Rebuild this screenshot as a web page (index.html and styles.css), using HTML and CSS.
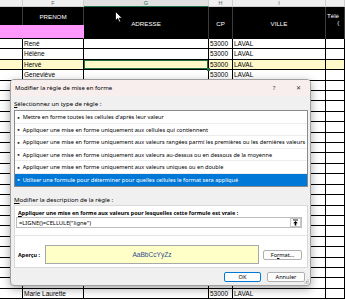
FILE: index.html
```html
<!DOCTYPE html>
<html lang="fr">
<head>
    <meta charset="UTF-8">
    <title>Mise en forme conditionnelle</title>
    <link rel="stylesheet" href="styles.css">
</head>
<body>
    <div class="sheet">
        <div class="row letters">
            <i></i><i>F</i><i class="sel">G</i><i>H</i><i>I</i><i></i>
        </div>
        <div class="header">
            <div class="e1"></div>
            <div class="f1">PRENOM</div>
            <div class="e2 pink"></div>
            <div class="f2 pink"></div>
            <div class="span g">ADRESSE</div>
            <div class="span h">CP</div>
            <div class="span i">VILLE</div>
            <div class="span j top">Télé<br>&nbsp;&nbsp;&nbsp;&nbsp;&nbsp;&nbsp;(</div>
        </div>
        <div class="row"><i></i><i>René</i><i></i><i>53000</i><i>LAVAL</i><i></i></div>
        <div class="row"><i></i><i>Hélène</i><i></i><i>53000</i><i>LAVAL</i><i></i></div>
        <div class="row hl"><i></i><i>Hervé</i><i class="active"></i><i>53000</i><i>LAVAL</i><i></i></div>
        <div class="row"><i></i><i>Geneviève</i><i></i><i>53000</i><i>LAVAL</i><i></i></div>
        <div class="row"><i></i><i></i><i></i><i></i><i></i><i></i></div>
        <div class="row"><i></i><i></i><i></i><i></i><i></i><i></i></div>
        <div class="row"><i></i><i></i><i></i><i></i><i></i><i></i></div>
        <div class="row"><i></i><i></i><i></i><i></i><i></i><i></i></div>
        <div class="row"><i></i><i></i><i></i><i></i><i></i><i></i></div>
        <div class="row"><i></i><i></i><i></i><i></i><i></i><i></i></div>
        <div class="row"><i></i><i></i><i></i><i></i><i></i><i></i></div>
        <div class="row"><i></i><i></i><i></i><i></i><i></i><i></i></div>
        <div class="row"><i></i><i></i><i></i><i></i><i></i><i></i></div>
        <div class="row"><i></i><i></i><i></i><i></i><i></i><i></i></div>
        <div class="row"><i></i><i></i><i></i><i></i><i></i><i></i></div>
        <div class="row"><i></i><i></i><i></i><i></i><i></i><i></i></div>
        <div class="row"><i></i><i></i><i></i><i></i><i></i><i></i></div>
        <div class="row"><i></i><i></i><i></i><i></i><i></i><i></i></div>
        <div class="row"><i></i><i></i><i></i><i></i><i></i><i></i></div>
        <div class="row"><i></i><i></i><i></i><i></i><i></i><i></i></div>
        <div class="row"><i></i><i></i><i></i><i></i><i></i><i></i></div>
        <div class="row"><i></i><i></i><i></i><i></i><i></i><i></i></div>
        <div class="row"><i></i><i></i><i></i><i></i><i></i><i></i></div>
        <div class="row"><i></i><i></i><i></i><i></i><i></i><i></i></div>
        <div class="row"><i></i><i>Marie Laurette</i><i></i><i>53000</i><i>LAVAL</i><i></i></div>
    </div>

    <svg class="cursor" width="8" height="12" viewBox="0 0 8 12">
        <path d="M0.5 0.5 L0.5 9.5 L2.7 7.5 L4.2 11 L5.6 10.4 L4.2 7.1 L7.2 7.1 Z" fill="#fff" stroke="#000" stroke-width="0.8"/>
    </svg>

    <div class="dialog">
        <div class="titlebar">
            <span class="title">Modifier la règle de mise en forme</span>
            <span class="tb-btn">?</span>
            <span class="tb-btn close">✕</span>
        </div>
        <div class="dlg-body">
            <div class="label"><u>S</u>électionnez un type de règle :</div>
            <ul class="rules">
                <li><b>►</b>Mettre en forme toutes les cellules d'après leur valeur</li>
                <li><b>►</b>Appliquer une mise en forme uniquement aux cellules qui contiennent</li>
                <li><b>►</b>Appliquer une mise en forme uniquement aux valeurs rangées parmi les premières ou les dernières valeurs</li>
                <li><b>►</b>Appliquer une mise en forme uniquement aux valeurs au-dessus ou en dessous de la moyenne</li>
                <li><b>►</b>Appliquer une mise en forme uniquement aux valeurs uniques ou en double</li>
                <li class="selected"><b>►</b>Utiliser une formule pour déterminer pour quelles cellules le format sera appliqué</li>
            </ul>
            <div class="label second"><u>M</u>odifier la description de la règle :</div>
            <div class="desc">
                <div class="desc-top">
                    <div class="strong"><u>A</u>ppliquer une mise en forme aux valeurs pour lesquelles cette formule est vraie :</div>
                    <div class="formula">
                        <span class="expr">=LIGNE()=CELLULE("ligne")</span>
                        <span class="pick">
                            <svg width="7" height="7" viewBox="0 0 7 7">
                                <path d="M1 1 H6" stroke="#000" stroke-width="0.9"/>
                                <path d="M3.5 2 L1.2 4.3 H2.7 V6.5 H4.3 V4.3 H5.8 Z" fill="#000"/>
                            </svg>
                        </span>
                    </div>
                </div>
                <div class="preview-row">
                    <span class="strong plabel">Aperçu :</span>
                    <div class="preview">AaBbCcYyZz</div>
                    <button class="btn format">Fo<u>r</u>mat...</button>
                </div>
            </div>
            <div class="actions">
                <button class="btn ok">OK</button>
                <button class="btn">Annuler</button>
            </div>
        </div>
        <svg class="grip" width="5" height="5" viewBox="0 0 5 5">
            <rect x="3.5" y="0.5" width="1" height="1" fill="#999"/>
            <rect x="2" y="2" width="1" height="1" fill="#999"/>
            <rect x="3.5" y="2" width="1" height="1" fill="#999"/>
            <rect x="0.5" y="3.5" width="1" height="1" fill="#999"/>
            <rect x="2" y="3.5" width="1" height="1" fill="#999"/>
            <rect x="3.5" y="3.5" width="1" height="1" fill="#999"/>
        </svg>
    </div>
</body>
</html>
```

FILE: styles.css
```css
html, body {
    margin: 0;
    padding: 0;
    overflow: hidden;
    background: #fff;
}

body {
    width: 345px;
    height: 300px;
    position: relative;
    font-family: "Liberation Sans", Arial, sans-serif;
}

/* ---------- spreadsheet ---------- */

.sheet {
    width: 345px;
    overflow: hidden;
}

.row,
.header {
    display: grid;
    grid-template-columns: 23px 61px 125px 24px 93px 19px;
}

.row {
    height: 10.42px;
}

.row i {
    font-style: normal;
    font-size: 6.5px;
    line-height: 9.4px;
    padding-left: 1px;
    color: #000;
    border-right: 1px solid #000;
    border-bottom: 1px solid #000;
    white-space: nowrap;
    overflow: hidden;
    position: relative;
}

.row.hl {
    background: #fff9c9;
}

.row .active {
    box-shadow: inset 0 0 0 1px #217346;
    overflow: visible;
}

.row .active::after {
    content: "";
    position: absolute;
    right: -2px;
    bottom: -2px;
    width: 3px;
    height: 3px;
    background: #217346;
    z-index: 2;
}

.letters {
    height: 7px;
    background: #efefef;
}

.letters i {
    font-size: 5.5px;
    line-height: 7px;
    text-align: center;
    color: #666;
    padding: 0;
    border-right: 1px solid #cfcfcf;
    border-bottom: 1px solid #cfcfcf;
}

.letters .sel {
    background: #e1e1e1;
    border-bottom: 1px solid #217346;
    color: #217346;
}

.header {
    grid-template-rows: 18px 14px;
    background: #000;
    color: #fff;
    font-size: 6.2px;
}

.header div {
    display: flex;
    align-items: center;
    justify-content: center;
    border-right: 1px solid #3a3a3a;
}

.header .e1 { grid-column: 1; grid-row: 1; }
.header .f1 { grid-column: 2; grid-row: 1; }
.header .e2 { grid-column: 1; grid-row: 2; }
.header .f2 { grid-column: 2; grid-row: 2; }
.header .span { grid-row: 1 / span 2; }
.header .g { grid-column: 3; }
.header .h { grid-column: 4; }
.header .i { grid-column: 5; }
.header .j { grid-column: 6; }

.header .pink {
    background: #ff99ff;
    border-right-color: #ff99ff;
    border-bottom: 1px solid #000;
}

.header .top {
    align-items: flex-start;
    justify-content: flex-start;
    padding: 5px 0 0 1px;
    line-height: 7px;
    white-space: nowrap;
    overflow: hidden;
}

.cursor {
    position: absolute;
    left: 115px;
    top: 11px;
}

/* ---------- dialog ---------- */

.dialog {
    position: absolute;
    left: 10px;
    top: 79px;
    width: 301px;
    height: 207px;
    box-sizing: border-box;
    background: #f0f0f0;
    border: 1px solid #a0a0a0;
    border-radius: 4px;
    box-shadow: 0 3px 10px rgba(0, 0, 0, 0.35);
    font-family: "Noto Sans", "Open Sans", sans-serif;
    font-size: 5.8px;
    color: #000;
    overflow: hidden;
}

.titlebar {
    height: 16px;
    background: #f8eeee;
    display: flex;
    align-items: center;
    padding-left: 4px;
}

.title {
    flex: 1;
    font-size: 6px;
}

.tb-btn {
    width: 24px;
    text-align: center;
    font-size: 6px;
    color: #333;
}

.dlg-body {
    padding: 0 2px 0 3px;
}

.label {
    height: 8px;
    line-height: 8px;
    margin-top: 4px;
    font-size: 6.1px;
}

.label.second {
    margin-top: 9px;
}

.rules {
    list-style: none;
    margin: 2px 0 0;
    padding: 0;
    height: 77px;
    box-sizing: border-box;
    background: #fff;
    border: 1px solid #8a8a8a;
}

.rules li {
    height: 12.5px;
    line-height: 12px;
    box-sizing: border-box;
    padding-left: 2px;
    font-size: 5.6px;
    border-bottom: 1px solid #ececec;
    white-space: nowrap;
    overflow: hidden;
}

.rules li b {
    font-weight: normal;
    font-size: 3.8px;
    margin-right: 2px;
    vertical-align: 0.5px;
}

.rules li.selected {
    background: #0078d7;
    color: #fff;
    border-bottom: none;
}

.desc {
    margin-top: 1px;
    height: 63px;
    box-sizing: border-box;
    background: #fff;
    border: 1px solid #dadada;
}

.desc-top {
    height: 30px;
    box-sizing: border-box;
    padding-top: 3px;
    border-bottom: 1px solid #e4e4e4;
}

.strong {
    font-weight: bold;
    font-size: 5.45px;
    line-height: 8px;
    padding-left: 3px;
    white-space: nowrap;
}

.formula {
    margin: 0 5px 0 1px;
    height: 11px;
    box-sizing: border-box;
    border: 1px solid #bdbdbd;
    display: flex;
    align-items: center;
    justify-content: space-between;
    padding-left: 2px;
}

.pick {
    width: 11px;
    height: 9px;
    box-sizing: border-box;
    border: 1px solid #c8c8c8;
    display: flex;
    align-items: center;
    justify-content: center;
}

.preview-row {
    display: flex;
    align-items: center;
    padding-top: 9px;
}

.plabel {
    flex: 0 0 30px;
    box-sizing: border-box;
}

.preview {
    width: 214px;
    height: 19px;
    box-sizing: border-box;
    background: #ffffc8;
    border: 1px solid #a8a8a8;
    display: flex;
    align-items: center;
    justify-content: center;
    font-family: "Liberation Sans", Arial, sans-serif;
    font-size: 6.6px;
    color: #2a4d8f;
}

.btn {
    font-family: inherit;
    font-size: 5.6px;
    height: 10px;
    padding: 0;
    box-sizing: border-box;
    background: #fdfdfd;
    border: 1px solid #b0b0b0;
    border-radius: 2px;
    color: #000;
    line-height: 8px;
}

.format {
    width: 39px;
    margin-left: 4px;
}

.actions {
    display: flex;
    justify-content: flex-end;
    gap: 6px;
    margin: 4px 3px 0 0;
}

.actions .btn {
    width: 38px;
}

.actions .ok {
    width: 37px;
    border-color: #0078d7;
}

.grip {
    position: absolute;
    right: 1px;
    bottom: 1px;
}
```
